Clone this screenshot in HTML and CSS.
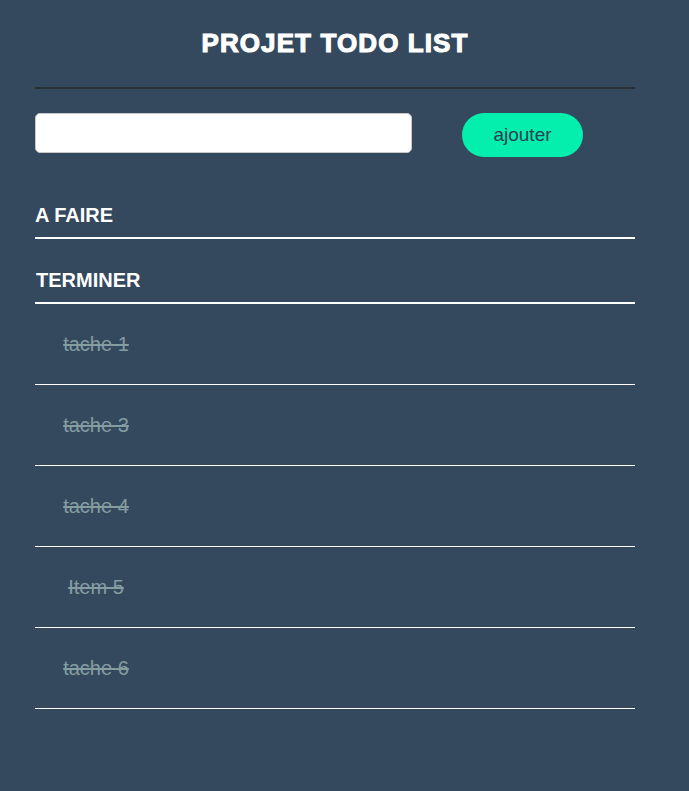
FILE: index.html
```html
<!DOCTYPE html>
<html lang="fr">
<head>
<meta charset="utf-8">
<title>Projet Todo List</title>
<link rel="stylesheet" href="styles.css">
</head>
<body>
<div class="app">
  <h1 class="title">PROJET TODO LIST</h1>
  <hr class="rule">
  <form class="add-form">
    <input class="add-input" type="text">
    <button class="add-btn" type="button">ajouter</button>
  </form>
  <h2 class="section">A FAIRE</h2>
  <ul class="list"></ul>
  <h2 class="section section-done">TERMINER</h2>
  <ul class="list">
    <li class="item"><span class="item-text">tache 1</span></li>
    <li class="item"><span class="item-text">tache 3</span></li>
    <li class="item"><span class="item-text">tache 4</span></li>
    <li class="item"><span class="item-text">Item 5</span></li>
    <li class="item"><span class="item-text">tache 6</span></li>
  </ul>
</div>
</body>
</html>
```
FILE: styles.css
```css
html, body {
  margin: 0;
  padding: 0;
  background: #34495e;
}
body {
  font-family: "Liberation Sans", Arial, sans-serif;
  color: #fff;
}
.app {
  width: 600px;
  margin: 0 35px;
}
.title {
  margin: 0;
  padding-top: 28px;
  font-size: 26px;
  line-height: 30px;
  font-weight: 900;
  letter-spacing: 1.1px;
  -webkit-text-stroke: 1.1px #fff;
  text-align: center;
  color: #fff;
}
.rule {
  margin: 29px 0 0;
  border: 0;
  border-top: 2px solid #2b3036;
  height: 0;
}
.add-form {
  display: flex;
  align-items: flex-start;
  gap: 50px;
  margin-top: 24px;
}
.add-input {
  box-sizing: border-box;
  width: 377px;
  height: 40px;
  margin: 0;
  border: 1px solid #c8c8c8;
  border-radius: 5px;
  background: #fff;
  padding: 0 10px;
}
.add-btn {
  box-sizing: border-box;
  width: 121px;
  height: 44px;
  margin: 0;
  border: 0;
  border-radius: 22px;
  background: #04efad;
  color: #2c3e50;
  font-family: "Liberation Sans", Arial, sans-serif;
  font-size: 19px;
  padding: 0;
}
.section {
  margin: 46px 0 0;
  padding-bottom: 10px;
  font-size: 20px;
  line-height: 24px;
  font-weight: bold;
  border-bottom: 2px solid #fff;
}
.section-done {
  margin-top: 29px;
  padding-left: 1px;
  padding-bottom: 10px;
}
.list {
  list-style: none;
  margin: 0;
  padding: 0;
}
.item {
  padding: 29px 0 28px;
  border-bottom: 1px solid #fff;
  font-size: 20px;
  line-height: 23px;
}
.item-text {
  display: inline-block;
  width: 122px;
  text-align: center;
  color: #859ca1;
  text-decoration: line-through;
}
```
